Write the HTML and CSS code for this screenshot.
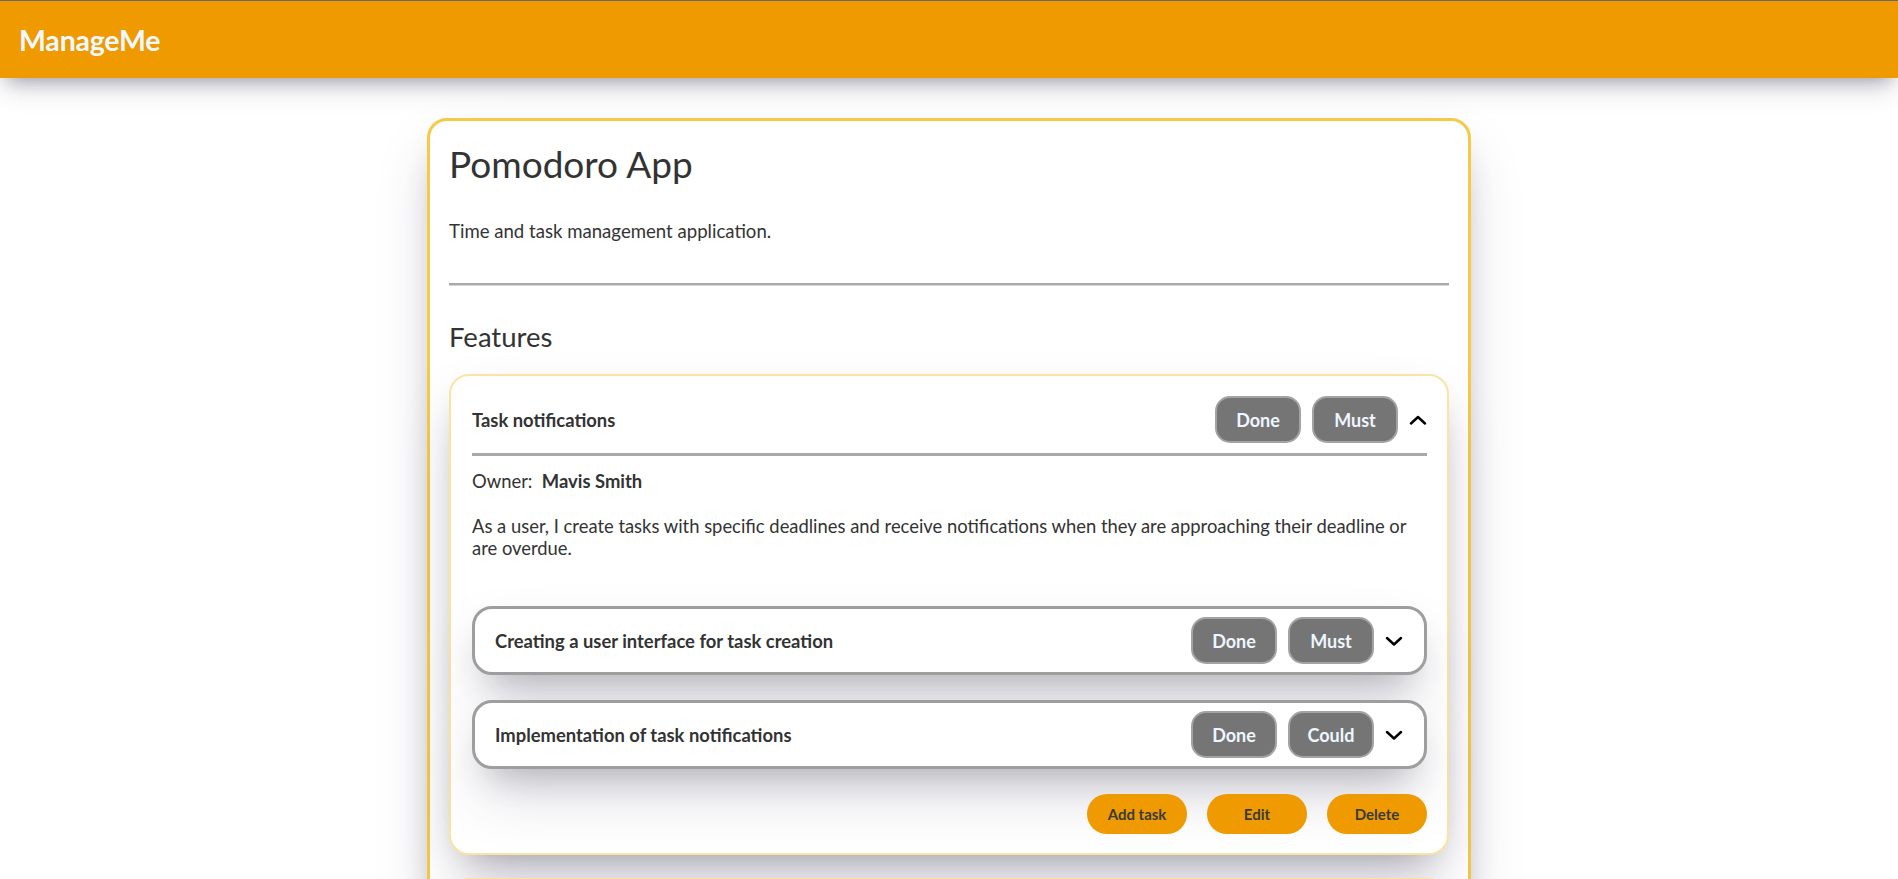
FILE: index.html
```html
<!DOCTYPE html>
<html lang="en">
<head>
<meta charset="utf-8">
<title>ManageMe</title>
<link rel="stylesheet" href="styles.css">
</head>
<body>
<header class="topbar">
  <span class="brand">ManageMe</span>
</header>
<main class="project">
  <h1 class="project-title">Pomodoro App</h1>
  <p class="project-desc">Time and task management application.</p>
  <hr class="divider">
  <h2 class="section-title">Features</h2>

  <section class="feature">
    <div class="feature-head">
      <span class="feature-name">Task notifications</span>
      <div class="badges">
        <span class="badge">Done</span>
        <span class="badge">Must</span>
        <svg class="chev" width="18" height="10" viewBox="0 0 18 10"><polyline points="2,8.5 9,2 16,8.5" fill="none" stroke="#000" stroke-width="2.4" stroke-linecap="round" stroke-linejoin="round"/></svg>
      </div>
    </div>
    <div class="feature-body">
      <p class="owner">Owner:&nbsp; <strong>Mavis Smith</strong></p>
      <p class="feature-desc">As a user, I create tasks with specific deadlines and receive notifications when they are approaching their deadline or are overdue.</p>
      <div class="tasks">
        <div class="task">
          <span class="task-name">Creating a user interface for task creation</span>
          <div class="badges">
            <span class="badge">Done</span>
            <span class="badge">Must</span>
            <svg class="chev" width="18" height="10" viewBox="0 0 18 10"><polyline points="2,2 9,8.5 16,2" fill="none" stroke="#000" stroke-width="2.4" stroke-linecap="round" stroke-linejoin="round"/></svg>
          </div>
        </div>
        <div class="task">
          <span class="task-name">Implementation of task notifications</span>
          <div class="badges">
            <span class="badge">Done</span>
            <span class="badge">Could</span>
            <svg class="chev" width="18" height="10" viewBox="0 0 18 10"><polyline points="2,2 9,8.5 16,2" fill="none" stroke="#000" stroke-width="2.4" stroke-linecap="round" stroke-linejoin="round"/></svg>
          </div>
        </div>
      </div>
      <div class="actions">
        <button class="action">Add task</button>
        <button class="action">Edit</button>
        <button class="action">Delete</button>
      </div>
    </div>
  </section>

  <section class="feature feature-next"></section>
</main>
</body>
</html>
```

FILE: styles.css
```css
* { box-sizing: border-box; }

html, body {
  margin: 0;
  padding: 0;
  background: #ffffff;
  font-family: Lato, "Open Sans", sans-serif;
  color: #333333;
  overflow: hidden;
}

.topbar {
  height: 78px;
  border-top: 1px solid #6a6a6a;
  background: #ee9a00;
  display: flex;
  align-items: center;
  padding-left: 19px;
  box-shadow: 0 13px 27px -5px rgba(50, 50, 93, 0.25), 0 8px 16px -8px rgba(0, 0, 0, 0.3);
  position: relative;
  z-index: 2;
}

.brand {
  color: #f0f8ff;
  font-weight: 700;
  font-size: 28.5px;
  letter-spacing: -0.2px;
}

.project {
  width: 1044px;
  margin: 40px auto 0;
  border: 3px solid #f5ca47;
  border-radius: 20px;
  padding: 21px 19px 40px;
  background: #fff;
  box-shadow: 0 30px 60px -12px rgba(50, 50, 93, 0.25), 0 18px 36px -18px rgba(0, 0, 0, 0.3);
}

.project-title {
  margin: 0;
  font-size: 37px;
  line-height: 44px;
  font-weight: 400;
  color: #333;
}

.project-desc {
  margin: 33px 0 0;
  font-size: 18.6px;
  line-height: 24px;
}

.divider {
  margin: 40px 0 0;
  border: 0;
  border-top: 2px solid #a9a9a9;
  border-bottom: 1px solid #d6d6d6;
  height: 0;
}

.section-title {
  margin: 35px 0 0;
  font-size: 27.5px;
  line-height: 32px;
  font-weight: 400;
}

.feature {
  margin-top: 21px;
  border: 2px solid #fbe3a3;
  border-radius: 20px;
  padding: 20px 20px 19px 21px;
  background: #fff;
  box-shadow: 0 30px 60px -12px rgba(50, 50, 93, 0.25), 0 18px 36px -18px rgba(0, 0, 0, 0.3);
}

.feature-next {
  height: 120px;
  margin-top: 23px;
}

.feature-head {
  display: flex;
  align-items: center;
  justify-content: space-between;
  padding-bottom: 10px;
  border-bottom: 3px solid #a9a9a9;
}

.feature-name, .task-name {
  font-weight: 700;
  font-size: 18.4px;
}

.badges {
  display: flex;
  align-items: center;
  gap: 11px;
}

.badge {
  width: 86px;
  height: 47px;
  display: flex;
  align-items: center;
  justify-content: center;
  background: #757575;
  border: 2px solid #a3a3a3;
  border-radius: 15px;
  color: #eef6ff;
  font-weight: 700;
  font-size: 18px;
}

.chev {
  display: block;
}

.owner {
  margin: 14px 0 0;
  font-size: 18.4px;
  line-height: 22px;
}

.owner strong {
  font-weight: 700;
}

.feature-desc {
  margin: 23px 0 0;
  font-size: 18.4px;
  line-height: 22px;
}

.tasks {
  margin-top: 47px;
  display: flex;
  flex-direction: column;
  gap: 25px;
}

.task {
  height: 69px;
  display: flex;
  align-items: center;
  justify-content: space-between;
  border: 3px solid #9e9e9e;
  border-radius: 20px;
  padding: 0 21px 0 20px;
  background: #fff;
  box-shadow: 0 30px 60px -12px rgba(50, 50, 93, 0.25), 0 18px 36px -18px rgba(0, 0, 0, 0.3);
}

.actions {
  margin-top: 25px;
  display: flex;
  justify-content: flex-end;
  gap: 20px;
}

.action {
  width: 100px;
  height: 40px;
  border: 0;
  border-radius: 20px;
  background: #ee9a00;
  color: #3a3a3a;
  font-family: Lato, sans-serif;
  font-weight: 700;
  font-size: 15px;
  padding: 0;
}
```
